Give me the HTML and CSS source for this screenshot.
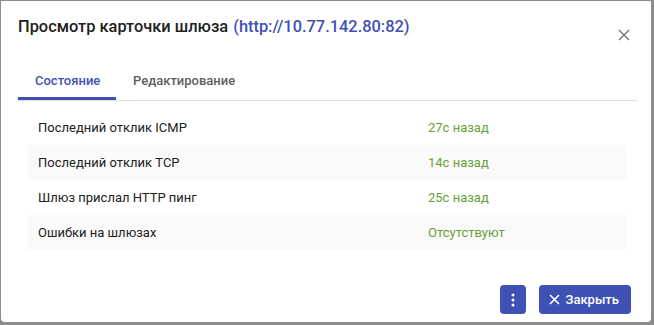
FILE: index.html
```html
<!DOCTYPE html>
<html lang="ru">
<head>
    <meta charset="UTF-8">
    <title>Просмотр карточки шлюза</title>
    <link rel="stylesheet" href="styles.css">
</head>
<body>
<div class="dialog">
    <!-- Header -->
    <div class="dialog-header">
        <h2 class="dialog-title">Просмотр карточки шлюза <a class="gw-link" href="#">(http://10.77.142.80:82)</a></h2>
        <button class="close-btn" aria-label="Закрыть">
            <svg width="12" height="12" viewBox="0 0 12 12"><path d="M1 1L11 11M11 1L1 11" stroke="#757575" stroke-width="1.4" fill="none"/></svg>
        </button>
    </div>

    <!-- Tabs -->
    <div class="tabs">
        <div class="tab active">Состояние</div>
        <div class="tab">Редактирование</div>
    </div>

    <!-- Status table -->
    <div class="status-list">
        <div class="status-row">
            <span class="label">Последний отклик ICMP</span>
            <span class="value">27с назад</span>
        </div>
        <div class="status-row">
            <span class="label">Последний отклик TCP</span>
            <span class="value">14с назад</span>
        </div>
        <div class="status-row">
            <span class="label">Шлюз прислал HTTP пинг</span>
            <span class="value">25с назад</span>
        </div>
        <div class="status-row">
            <span class="label">Ошибки на шлюзах</span>
            <span class="value">Отсутствуют</span>
        </div>
    </div>

    <!-- Footer actions -->
    <div class="dialog-actions">
        <button class="btn btn-icon" aria-label="Ещё">
            <svg width="4" height="14" viewBox="0 0 4 14"><circle cx="2" cy="2" r="1.5" fill="#fff"/><circle cx="2" cy="7" r="1.5" fill="#fff"/><circle cx="2" cy="12" r="1.5" fill="#fff"/></svg>
        </button>
        <button class="btn">
            <svg width="11" height="11" viewBox="0 0 11 11"><path d="M1 1L10 10M10 1L1 10" stroke="#fff" stroke-width="1.6" fill="none"/></svg>
            Закрыть
        </button>
    </div>
</div>
</body>
</html>
```

FILE: styles.css
```css
html, body {
    margin: 0;
    height: 100%;
}

body {
    background-color: #8c8c8c;
    font-family: Roboto, "Liberation Sans", sans-serif;
    color: #212121;
}

.dialog {
    box-sizing: border-box;
    width: 650px;
    height: 321px;
    margin: 1px 0 0 1px;
    background-color: #fff;
    border-radius: 0 0 4px 4px;
    display: flex;
    flex-direction: column;
    padding: 0 14px 0 17px;
}

.dialog-header {
    display: flex;
    align-items: flex-start;
    justify-content: space-between;
    padding-top: 14px;
}

.dialog-title {
    margin: 0;
    font-size: 16.4px;
    font-weight: 500;
    line-height: 24px;
    color: #212121;
}

.gw-link {
    color: #3f51b5;
    text-decoration: none;
    margin-left: 1px;
}

.close-btn {
    border: none;
    background: none;
    padding: 0;
    margin: 13px 6px 0 0;
    width: 14px;
    height: 14px;
    display: flex;
    align-items: center;
    justify-content: center;
    cursor: pointer;
}

.tabs {
    display: flex;
    margin-top: 22px;
    border-bottom: 1px solid #e0e0e0;
}

.tab {
    padding: 0 17px;
    height: 36px;
    line-height: 33px;
    font-size: 13px;
    font-weight: 500;
    color: #5f5f5f;
    box-sizing: border-box;
}

.tab.active {
    color: #3f51b5;
    border-bottom: 3px solid #3f51b5;
    margin-bottom: -1px;
    width: 98px;
    text-align: center;
}

.status-list {
    margin: 9px 10px 0;
}

.status-row {
    display: flex;
    height: 35px;
    align-items: center;
    font-size: 13px;
    padding-left: 10px;
}

.status-row:nth-child(even) {
    background-color: #fafafa;
}

.label {
    width: 390px;
}

.value {
    color: #689f38;
}

.dialog-actions {
    margin-top: auto;
    margin-bottom: 8px;
    display: flex;
    justify-content: flex-end;
    gap: 13px;
    padding-right: 6px;
}

.btn {
    height: 29px;
    border: none;
    border-radius: 4px;
    background-color: #3f51b5;
    color: #fff;
    font-family: inherit;
    font-size: 13px;
    font-weight: 500;
    padding: 0 12px 0 10px;
    display: flex;
    align-items: center;
    gap: 6px;
    cursor: pointer;
}

.btn-icon {
    width: 26px;
    padding: 0;
    justify-content: center;
}
```
